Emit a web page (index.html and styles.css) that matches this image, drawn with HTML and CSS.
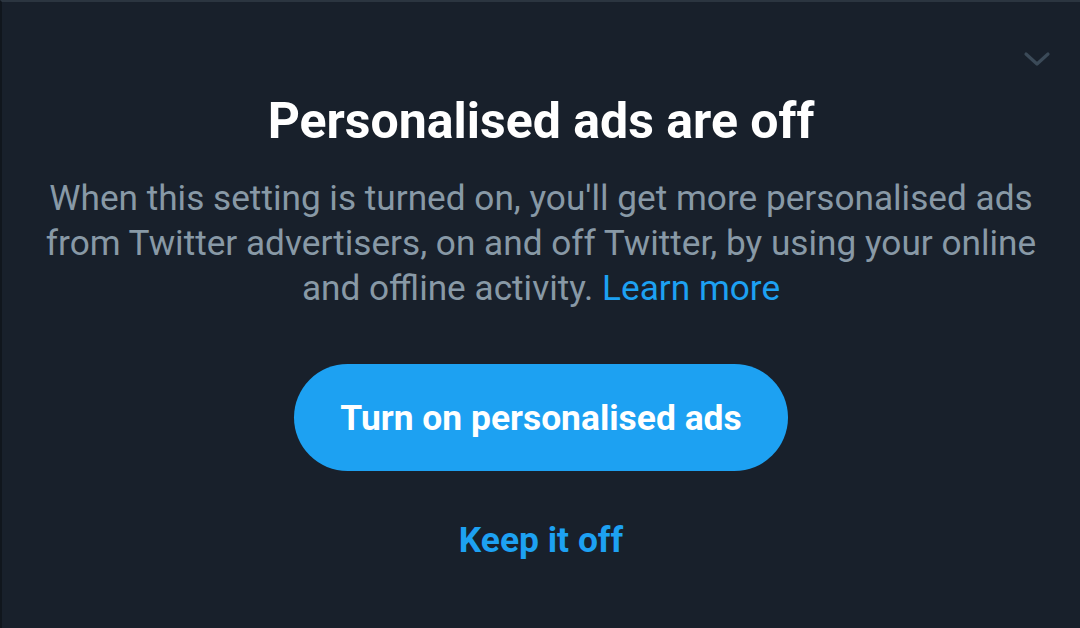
FILE: index.html
```html
<!DOCTYPE html>
<html lang="en">
<head>
<meta charset="utf-8">
<link rel="stylesheet" href="styles.css">
</head>
<body>
<div class="sheet">
  <svg class="chevron" viewBox="0 0 28 16" width="28" height="16" aria-hidden="true">
    <path d="M3 3 L14 13 L25 3" fill="none" stroke="currentColor" stroke-width="3.2" stroke-linecap="round" stroke-linejoin="round"/>
  </svg>
  <h1 class="title">Personalised ads are off</h1>
  <p class="body">When this setting is turned on, you'll get more personalised ads from Twitter advertisers, on and off Twitter, by using your online and offline activity. <a class="link" href="#">Learn more</a></p>
  <button class="primary">Turn on personalised ads</button>
  <button class="secondary">Keep it off</button>
</div>
</body>
</html>
```
FILE: styles.css
```css
html, body {
  margin: 0;
  padding: 0;
  background: #18202b;
}
.sheet {
  position: relative;
  width: 1080px;
  height: 628px;
  box-sizing: border-box;
  border-top: 2px solid #2b3540;
  border-left: 2px solid #10161d;
  background: #18202b;
  display: flex;
  flex-direction: column;
  align-items: center;
  font-family: Roboto, "Liberation Sans", sans-serif;
}
.chevron {
  position: absolute;
  top: 49px;
  right: 29px;
  color: #3b4a58;
}
.title {
  margin: 89px 0 0;
  font-size: 50px;
  line-height: 60px;
  font-weight: 700;
  color: #ffffff;
}
.body {
  margin: 25px 0 0;
  width: 1010px;
  text-align: center;
  font-size: 35.2px;
  line-height: 45px;
  color: #8899a6;
}
.link {
  color: #1da1f2;
  text-decoration: none;
}
.primary {
  margin-top: 53px;
  width: 494px;
  height: 107px;
  padding: 0;
  border: none;
  border-radius: 54px;
  background: #1da1f2;
  color: #ffffff;
  font-family: Roboto, "Liberation Sans", sans-serif;
  font-weight: 700;
  font-size: 35.4px;
}
.secondary {
  margin-top: 45px;
  border: none;
  background: transparent;
  padding: 0;
  color: #1da1f2;
  font-family: Roboto, "Liberation Sans", sans-serif;
  font-weight: 700;
  font-size: 35.4px;
  line-height: 48px;
}
```
